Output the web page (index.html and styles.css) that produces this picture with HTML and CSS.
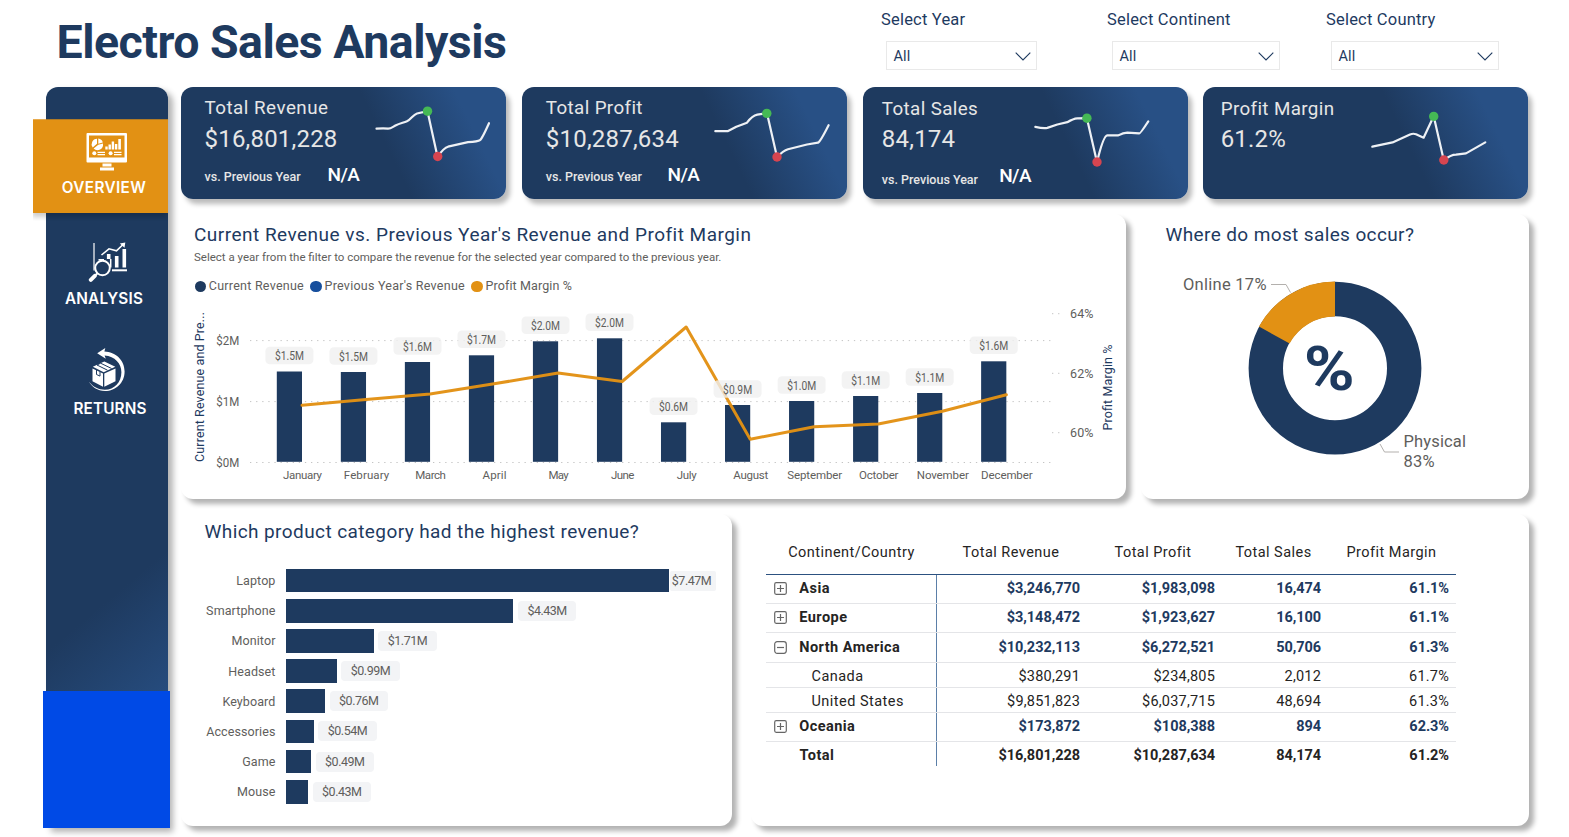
FILE: index.html
```html
<!DOCTYPE html>
<html lang="en">
<head>
<meta charset="utf-8">
<title>Electro Sales Analysis</title>
<link rel="stylesheet" href="styles.css">
</head>
<body>
<header class="header">
  <h1 class="title">Electro Sales Analysis</h1>
  <div class="filters">
    <div class="filter filter-year">
      <div class="filter-label">Select Year</div>
      <div class="select"><span>All</span><svg width="16" height="9" viewBox="0 0 16 9"><path d="M.7.7 8 8 15.300.7" /></svg></div>
    </div>
    <div class="filter filter-continent">
      <div class="filter-label">Select Continent</div>
      <div class="select"><span>All</span><svg width="16" height="9" viewBox="0 0 16 9"><path d="M.7.7 8 8 15.300.7" /></svg></div>
    </div>
    <div class="filter filter-country">
      <div class="filter-label">Select Country</div>
      <div class="select"><span>All</span><svg width="16" height="9" viewBox="0 0 16 9"><path d="M.7.7 8 8 15.300.7" /></svg></div>
    </div>
  </div>
</header>

<div class="layout">
  <nav class="sidebar">
    <div class="nav-item overview">
      <svg width="42" height="38.500" viewBox="0 0 42 38.500">
        <path fill="#fff" fill-rule="evenodd" d="M1.500 0h38.500a1 1 0 0 1 1 1v27.500a1 1 0 0 1-1 1H1.500a1 1 0 0 1-1-1V1a1 1 0 0 1 1-1ZM3 2.500v22h35.500v-22Z"/>
        <path fill="#fff" d="M16.500 30.500h9v3h-9zM14 34.500h14V37.500H14z"/>
        <path fill="#fff" d="M11 5.800v5l-4.300 3.600A5.400 5.400 0 0 1 11 5.800ZM12.300 5.600a5.200 5.200 0 0 1 4.500 3.900l-4.500 1.200ZM12.300 11.800l4.600-1.200a5.500 5.500 0 0 1-9.300 5Z"/>
        <path fill="#fff" d="M19.300 13.500h2.400v3h-2.400zM22.500 11.500h2.400v5h-2.400zM25.700 8.500h2.400v8h-2.400zM28.900 11h2.400v5.500h-2.400zM32.300 6h2.600v10.500h-2.600z"/>
        <circle cx="8.300" cy="20.300" r="2" fill="#fff"/><circle cx="24.600" cy="20.300" r="2" fill="#fff"/>
        <path fill="none" stroke="#fff" stroke-width="1.200" d="M11.500 19.300h7.500M11.500 21.600h7.500M28 19.300h7.500M28 21.600h7.500"/>
      </svg>
      <span>OVERVIEW</span>
    </div>
    <div class="nav-item analysis">
      <svg width="40" height="40" viewBox="0 0 40 40" fill="none" stroke="#fff">
        <path d="M6 1v27.500" stroke-width="1.600" opacity=".75"/>
        <path d="M24 28.300h15" stroke-width="2"/>
        <path d="M20.700 12v5M28.700 14v11.500M36.300 7v18.500" stroke-width="3.600"/>
        <path d="M10.500 17.700h5.500M22.700 17v8.500" stroke-width="1.500"/>
        <path d="m13.500 13 7.500-6.200 7.500 2L35.500 2" stroke-width="1.600"/>
        <path d="m31.800 1.500 5.500-1-.8 5.300z" fill="#fff" stroke="none"/>
        <circle cx="14.500" cy="26" r="7.300" stroke-width="2"/>
        <path d="m9.200 31.500-2 2" stroke-width="2"/>
        <path d="m6.800 33.800-4 4" stroke-width="4" stroke-linecap="round"/>
      </svg>
      <span>ANALYSIS</span>
    </div>
    <div class="nav-item returns">
      <svg width="38" height="44" viewBox="0 0 38 44">
        <path fill="#fff" d="M9.200 5.300 17.300 0l-.9 3.600C27.500 4 36.600 12 36.600 23.500c0 11.500-9 19.500-19.500 19.500C9.500 43 3.500 38.500.8 33.500c4 5.200 9.500 8.200 16 8.200 9.500 0 16.600-7.500 16.600-17.500 0-8.800-6.500-15.800-16.800-16.700l1.200 3.300Z"/>
        <path fill="#fff" d="M4.500 20.500 15 25.500v13.300L4.500 33.300ZM16.300 25.500l11.200-5v12.800l-11.200 5.500Z"/>
        <path fill="#fff" d="m4.800 18.800 11.500-5.300 11 5.300-11.600 5.400Z"/>
        <path fill="none" stroke="#1e3a5f" stroke-width="1" d="M12.600 15.200 9 17M12.600 15.200l11 5.300M9 17l10.500 5.200M8.500 22v4.500l3.500 1.600v-4.300"/>
      </svg>
      <span>RETURNS</span>
    </div>
    <div class="sidebar-block"></div>
  </nav>

  <main class="main">
    <section class="cards">
      <article class="card card-revenue">
        <div class="card-text">
          <div class="card-label">Total Revenue</div>
          <div class="card-value">$16,801,228</div>
          <div class="card-compare"><span>vs. Previous Year</span><b>N/A</b></div>
        </div>
        <svg class="spark" viewBox="371 87.300 135 111.700">
          <path d="M376.500 129Q384 128.500 388 129C391 129 393 127 396 125.500S403 123 407 121.500 413 115 417 113.800L427.500 111.500 437.500 157Q444 148 448 147L468 142.500Q478 142 480 140.500T489 123.500"/>
          <circle cx="427.500" cy="111.500" r="4.700" class="high"/><circle cx="437.700" cy="156.800" r="4.700" class="low"/>
        </svg>
      </article>
      <article class="card card-profit">
        <div class="card-text">
          <div class="card-label">Total Profit</div>
          <div class="card-value">$10,287,634</div>
          <div class="card-compare"><span>vs. Previous Year</span><b>N/A</b></div>
        </div>
        <svg class="spark" viewBox="711.700 87.300 135 111.700">
          <path d="M715 131.500H727.300L736 127 746.700 123Q752 116 757 115L766.700 113.500 776.700 157.300Q783 151 787.700 149.500L806.700 144.800 817.700 143Q820 142 828.300 125.500"/>
          <circle cx="766.500" cy="113.700" r="4.700" class="high"/><circle cx="776.700" cy="157.300" r="4.700" class="low"/>
        </svg>
      </article>
      <article class="card card-sales">
        <div class="card-text">
          <div class="card-label">Total Sales</div>
          <div class="card-value">84,174</div>
          <div class="card-compare"><span>vs. Previous Year</span><b>N/A</b></div>
        </div>
        <svg class="spark" viewBox="1032.700 87.300 155 111.700">
          <path d="M1035 127.200Q1043 129 1047 128.200L1057 124.800 1067 122.500Q1073 119 1077 118.700L1086.600 118.500 1096.700 162.500Q1103 136 1107 135.700H1118Q1123 133 1127 133L1139 133.700Q1140 134 1148 121.700"/>
          <circle cx="1086.600" cy="118.500" r="4.700" class="high"/><circle cx="1096.700" cy="162.300" r="4.700" class="low"/>
        </svg>
      </article>
      <article class="card card-margin">
        <div class="card-text">
          <div class="card-label">Profit Margin</div>
          <div class="card-value">61.2%</div>
        </div>
        <svg class="spark" viewBox="1373 87.300 155 111.700">
          <path d="M1372.300 147 1392.500 142.700 1410 134.800Q1413 133.500 1416 134.500L1423.600 138 1433.700 116.500 1443.800 160.500Q1451 155 1456 155L1466 153.700 1485.300 142.700"/>
          <circle cx="1433.700" cy="116.700" r="4.700" class="high"/><circle cx="1443.800" cy="160.300" r="4.700" class="low"/>
        </svg>
      </article>
    </section>

    <section class="row row-top">
      <article class="panel trend">
        <h2>Current Revenue vs. Previous Year's Revenue and Profit Margin</h2>
        <p class="subtitle">Select a year from the filter to compare the revenue for the selected year compared to the previous year.</p>
        <div class="legend">
          <span class="key"><i class="dot current"></i>Current Revenue</span>
          <span class="key"><i class="dot previous"></i>Previous Year's Revenue</span>
          <span class="key margin"><i class="dot profit"></i>Profit Margin %</span>
        </div>
        <svg class="chart" width="944" height="205" viewBox="181 294 944 205">
          <path class="grid" d="M250 340.600H1054M250 401.600H1054M250 462.500H1054M1052 313.700h8M1052 373.300h8M1052 432.700h8"/>
          <g class="axis">
            <text x="216.300" y="345" textLength="23" lengthAdjust="spacingAndGlyphs">$2M</text>
            <text x="216.300" y="406" textLength="23" lengthAdjust="spacingAndGlyphs">$1M</text>
            <text x="216.300" y="467" textLength="23" lengthAdjust="spacingAndGlyphs">$0M</text>
            <text x="1070" y="318.200" textLength="23.500">64%</text>
            <text x="1070" y="378" textLength="23.500">62%</text>
            <text x="1070" y="437.200" textLength="23.500">60%</text>
          </g>
          <g class="axis-title">
            <text transform="translate(204 462) rotate(-90)" textLength="150">Current Revenue and Pre...</text>
            <text transform="translate(1111.500 430.500) rotate(-90)" textLength="86">Profit Margin %</text>
          </g>
          <g class="bars" id="bars"></g>
          <polyline class="line" id="line"/>
          <g id="tags"></g>
          <g class="months" id="months"></g>
        </svg>
      </article>

      <article class="panel donut">
        <h2>Where do most sales occur?</h2>
        <svg class="chart" width="388" height="252" viewBox="1141 247 388 252">
          <circle cx="1335" cy="368.200" r="69.200" fill="none" stroke="#1e3a5f" stroke-width="34.400"/>
          <path d="M1335 299A69.200 69.200 0 0 0 1274.300 335" fill="none" stroke="#e29114" stroke-width="35"/>
          <path class="leader" d="M1271 284.500H1286L1290.500 292.500M1380 444L1384.500 452H1399"/>
          <text class="percent" x="1303.800" y="389.900" textLength="51" lengthAdjust="spacingAndGlyphs">%</text>
          <g class="slice-label">
            <text x="1183" y="290" textLength="83.500">Online 17%</text>
            <text x="1403.500" y="447" textLength="62.500">Physical</text>
            <text x="1403.500" y="467" textLength="31">83%</text>
          </g>
        </svg>
      </article>
    </section>

    <section class="row row-bottom">
      <article class="panel categories">
        <h2>Which product category had the highest revenue?</h2>
        <div class="hbars">
          <div class="hrow"><span class="name">Laptop</span><i class="bar" style="width:383px"></i><span class="pill tight">$7.47M</span></div>
          <div class="hrow"><span class="name">Smartphone</span><i class="bar" style="width:227.300px"></i><span class="pill">$4.43M</span></div>
          <div class="hrow"><span class="name">Monitor</span><i class="bar" style="width:87.700px"></i><span class="pill">$1.71M</span></div>
          <div class="hrow"><span class="name">Headset</span><i class="bar" style="width:50.700px"></i><span class="pill">$0.99M</span></div>
          <div class="hrow"><span class="name">Keyboard</span><i class="bar" style="width:39px"></i><span class="pill">$0.76M</span></div>
          <div class="hrow"><span class="name">Accessories</span><i class="bar" style="width:27.700px"></i><span class="pill">$0.54M</span></div>
          <div class="hrow"><span class="name">Game</span><i class="bar" style="width:25px"></i><span class="pill">$0.49M</span></div>
          <div class="hrow"><span class="name">Mouse</span><i class="bar" style="width:22px"></i><span class="pill">$0.43M</span></div>
        </div>
      </article>

      <article class="panel regions">
        <div class="table">
          <div class="tr head"><span>Continent/Country</span><span>Total Revenue</span><span>Total Profit</span><span>Total Sales</span><span>Profit Margin</span></div>
          <div class="tr group asia"><span><svg class="toggle" viewBox="0 0 13 13"><rect x=".7" y=".7" width="11.600" height="11.600" rx="1.500"/><path d="M3 6.500h7M6.500 3v7"/></svg>Asia</span><span>$3,246,770</span><span>$1,983,098</span><span>16,474</span><span>61.1%</span></div>
          <div class="tr group europe"><span><svg class="toggle" viewBox="0 0 13 13"><rect x=".7" y=".7" width="11.600" height="11.600" rx="1.500"/><path d="M3 6.500h7M6.500 3v7"/></svg>Europe</span><span>$3,148,472</span><span>$1,923,627</span><span>16,100</span><span>61.1%</span></div>
          <div class="tr group america"><span><svg class="toggle" viewBox="0 0 13 13"><rect x=".7" y=".7" width="11.600" height="11.600" rx="2.500"/><path d="M3 6.500h7"/></svg>North America</span><span>$10,232,113</span><span>$6,272,521</span><span>50,706</span><span>61.3%</span></div>
          <div class="tr child"><span>Canada</span><span>$380,291</span><span>$234,805</span><span>2,012</span><span>61.7%</span></div>
          <div class="tr child"><span>United States</span><span>$9,851,823</span><span>$6,037,715</span><span>48,694</span><span>61.3%</span></div>
          <div class="tr group oceania"><span><svg class="toggle" viewBox="0 0 13 13"><rect x=".7" y=".7" width="11.600" height="11.600" rx="1.500"/><path d="M3 6.500h7M6.500 3v7"/></svg>Oceania</span><span>$173,872</span><span>$108,388</span><span>894</span><span>62.3%</span></div>
          <div class="tr total"><span>Total</span><span>$16,801,228</span><span>$10,287,634</span><span>84,174</span><span>61.2%</span></div>
        </div>
      </article>
    </section>
  </main>
</div>
<script src="chart.js"></script>
</body>
</html>
```
FILE: styles.css
```css
* { box-sizing: border-box; }
body {
  margin: 0;
  width: 1569px;
  height: 837px;
  overflow: hidden;
  background: #fff;
  font-family: Roboto, "Liberation Sans", sans-serif;
  color: #1e3a5f;
}
h1, h2, p { margin: 0; }
i { font-style: normal; }
svg { display: block; flex: none; }

.header { display: flex; height: 87.3px; }
.title {
  padding: 13.8px 0 0 56.5px;
  width: 881px;
  font-size: 46.5px;
  line-height: 56px;
  font-weight: 700;
  letter-spacing: -0.52px;
}
.filters { display: flex; padding-top: 10.2px; }
.filter-label { font-size: 16.5px; line-height: 20px; letter-spacing: 0.2px; }
.filter-year { width: 226px; }
.filter-continent { width: 219px; }
.select {
  display: flex;
  align-items: center;
  justify-content: space-between;
  margin: 10.8px 0 0 5.4px;
  padding: 2px 5.5px 0 6px;
  height: 29px;
  border: 1px solid #e9e9e9;
  font-size: 14.5px;
  letter-spacing: 0.2px;
}
.filter-year .select { width: 151px; }
.filter-continent .select, .filter-country .select { width: 168px; }
.select svg { fill: none; stroke: #1e3a5f; stroke-width: 1.1; }

.layout { display: flex; padding-left: 46px; }

.sidebar {
  display: flex;
  flex-direction: column;
  width: 122px;
  height: 740.4px;
  border-radius: 12px 12px 0 0;
  background: linear-gradient(140deg, #1e3a5f 67%, #285085 88%);
  box-shadow: 5px 4px 6px rgba(0, 0, 0, .3);
  padding-top: 32px;
}
.nav-item {
  display: flex;
  flex-direction: column;
  align-items: center;
  color: #fff;
  font-family: Inter, Roboto, sans-serif;
  font-weight: 600;
  font-size: 15.3px;
  line-height: 18px;
}
.overview {
  height: 93.5px;
  margin-left: -13px;
  padding: 13.7px 0 0 7px;
  background: #e29114;
  box-shadow: -1px 4px 5px rgba(0, 0, 0, .2);
  letter-spacing: 0.36px;
  clip-path: inset(0 0 -8px 0);
}
.overview svg { margin: 0 0 8px 5px; }
.analysis { padding: 29.7px 6px 0 0; letter-spacing: 0.2px; }
.analysis svg { margin: 0 0 7.6px 7px; }
.returns { padding: 40.4px 0 0 6px; letter-spacing: 0.14px; }
.returns svg { margin: 0 7px 7.9px 0; }
.sidebar-block { height: 136.7px; margin: auto -2px 0 -3px; background: #004ae6; }

.main { display: flex; flex-direction: column; width: 1347.5px; margin-left: 13px; }

.cards { display: flex; justify-content: space-between; height: 111.7px; }
.card {
  display: flex;
  justify-content: space-between;
  width: 325px;
  border-radius: 12px;
  background: linear-gradient(64deg, #1e3a5f 61%, #285085 86%);
  box-shadow: 4px 5px 5px rgba(0, 0, 0, .27);
  color: #e6e6e6;
}
.card-text { padding: 8.3px 0 0 23.5px; white-space: nowrap; }
.card-profit .card-text { padding-left: 24px; }
.card-sales .card-text { padding: 9.3px 0 0 19.2px; }
.card-margin .card-text { padding: 9.3px 0 0 17.2px; }
.card-label { font-size: 18.8px; line-height: 24px; letter-spacing: 0.37px; }
.card-revenue .card-label { letter-spacing: 0.49px; }
.card-value { margin-top: 4.2px; font-size: 24px; line-height: 30px; letter-spacing: 0.2px; }
.card-sales .card-value, .card-margin .card-value { margin-top: 3.6px; }
.card-compare {
  display: flex;
  align-items: baseline;
  margin-top: 9.5px;
  font-size: 12.5px;
  line-height: 24px;
  font-weight: 500;
}
.card-compare span { width: 123px; }
.card-compare b { color: #fff; font-size: 19px; font-weight: 500; letter-spacing: -0.6px; }
.card-profit .card-compare span { width: 121.7px; }
.card-sales .card-compare { align-items: flex-start; margin-top: 10.8px; }
.card-sales .card-compare span { width: 117.4px; padding-top: 3.2px; }
.card-sales .card-compare b { margin-top: -1px; }
.spark { width: 135px; height: 111.7px; overflow: visible; }
.card-sales .spark, .card-margin .spark { width: 155px; }
.spark path { fill: none; stroke: #eef1f5; stroke-width: 2.2; stroke-linecap: round; stroke-linejoin: round; }
.high { fill: #45b955; }
.low { fill: #d64550; }

.row { display: flex; justify-content: space-between; }
.row-top { margin-top: 15px; height: 285.5px; }
.row-bottom { margin-top: 14.5px; height: 312px; }
.panel { border-radius: 12px; background: #fff; box-shadow: 5px 5px 5px rgba(0, 0, 0, .3); }
.panel h2 { font-size: 19px; line-height: 24px; font-weight: 400; letter-spacing: 0.45px; white-space: nowrap; }

.trend { width: 944.5px; padding-top: 9.4px; }
.trend h2 { padding-left: 13px; letter-spacing: 0.48px; }
.subtitle { margin-top: 1.7px; padding-left: 13px; font-size: 11.5px; line-height: 16px; color: #605e5c; }
.legend { display: flex; margin-top: 12.9px; padding-left: 13.5px; font-size: 12.5px; line-height: 16px; letter-spacing: 0.25px; color: #605e5c; }
.key { display: flex; align-items: center; margin-right: 6.3px; }
.margin { letter-spacing: 0.12px; }
.dot { width: 11.8px; height: 11.8px; margin: 1px 2.5px 0 0; border-radius: 50%; }
.current { background: #1e3a5f; }
.previous { background: #174f9d; }
.profit { background: #e29114; }

.grid { fill: none; stroke: #c4c4c4; stroke-width: 1; stroke-dasharray: 1.3 4.8; }
.axis text { font-size: 12.5px; fill: #605e5c; }
.axis-title text { font-size: 12.5px; fill: #1e3a5f; }
.bars rect { fill: #1e3a5f; }
.line { fill: none; stroke: #e29114; stroke-opacity: .97; stroke-width: 3; stroke-linejoin: round; stroke-linecap: round; }
.tag rect { fill: #f0f0f0; fill-opacity: .8; }
.tag text { font-size: 12px; fill: #605e5c; text-anchor: middle; }
.months text { font-size: 11.5px; fill: #605e5c; text-anchor: middle; }

.donut { width: 388px; padding-top: 9.4px; }
.donut h2 { padding-left: 25px; letter-spacing: 0.38px; }
.leader { fill: none; stroke: #b3b0ad; stroke-width: 1; }
.percent { font-size: 62px; font-weight: 700; fill: #1e3a5f; }
.slice-label text { font-size: 16.5px; fill: #605e5c; }

.categories { width: 551px; padding-top: 6.4px; }
.categories h2 { padding-left: 23.5px; letter-spacing: 0.41px; }
.hbars { padding-top: 21.2px; }
.hrow { display: flex; align-items: center; height: 30.17px; font-size: 12.5px; color: #605e5c; }
.name { width: 94.5px; margin-right: 10.5px; text-align: right; letter-spacing: 0.1px; }
.bar { height: 23.6px; background: #1e3a5f; }
.pill {
  width: 58.5px;
  height: 20px;
  margin-left: 4.5px;
  border-radius: 4px;
  background: #f3f4f6;
  line-height: 20px;
  text-align: center;
  letter-spacing: -0.5px;
}
.tight { width: 46px; margin-left: 1px; padding-right: 3px; border-radius: 2px; }

.regions { width: 777.5px; padding: 21px 0 0 15px; }
.table { width: 690px; font-size: 14.5px; color: #252423; }
.tr {
  display: grid;
  grid-template-columns: 170px 149px 135px 106px 130px;
  height: 29.5px;
  border-bottom: 1px solid #e4e5e8;
}
.tr > span { display: flex; align-items: center; justify-content: flex-end; padding-right: 5px; letter-spacing: 0.2px; }
.tr > span:last-child { padding-right: 7px; }
.tr > span:first-child { justify-content: flex-start; padding-left: 33.5px; letter-spacing: 0.47px; }
.tr > span:nth-child(2) { border-left: 1.5px solid #5b7fa8; }
.tr.head { height: 40px; border-bottom: 1.5px solid #2c5180; }
.tr.head > span, .tr.head > span:first-child { justify-content: center; padding: 0 0 4px 1px; border: 0; letter-spacing: 0.46px; }
.group, .total { font-weight: 700; }
.group > span { color: #1e3a5f; }
.group > span:first-child { padding-left: 8.3px; color: #252423; letter-spacing: 0.45px; }
.group > span + span, .total > span + span { letter-spacing: -0.05px; }
.tr.child { height: 24.6px; }
.tr.child > span { padding-top: 3px; }
.tr.child > span:first-child { padding-left: 45.5px; }
.total { height: 24.5px; border: 0; }
.total > span { padding-top: 3px; }
.asia { height: 28.9px; }
.europe { height: 29.4px; }
.america { height: 30.1px; }
.europe > span, .america > span { padding-bottom: 1px; }
.oceania { height: 29px; }
.toggle { width: 13px; height: 13px; margin-right: 12px; fill: none; stroke: #666; stroke-width: 1.2; }
```
FILE: chart.js
```js
// name, bar top, value label, margin line y, month label width
const data = [
  ['January', 371.5, '$1.5M', 405.3, 39], ['February', 372, '$1.5M', 399.5, 45.5],
  ['March', 362, '$1.6M', 394, 30.5], ['April', 355.3, '$1.7M', 383.8, 24],
  ['May', 341.3, '$2.0M', 373, 20], ['June', 338.3, '$2.0M', 381.5, 23.5],
  ['July', 422.3, '$0.6M', 327, 20], ['August', 405, '$0.9M', 439.3, 35],
  ['September', 401, '$1.0M', 426.7, 55], ['October', 396, '$1.1M', 424, 39.5],
  ['November', 393, '$1.1M', 411.3, 52], ['December', 361.3, '$1.6M', 394.7, 51.5]
];
const step = 64.03, base = 461.8;
let bars = '', tags = '', months = '', points = '';
data.forEach(([name, top, value, y, width], i) => {
  const left = 276.8 + step * i, mid = left + 12.6, right = left + 25.2;
  bars += `<rect x="${left}" y="${top}" width="25.2" height="${base - top}"/>`;
  tags += `<g class="tag"><rect x="${mid - 24}" y="${top - 24.8}" width="48" height="17.5" rx="4.5"/>` +
    `<text x="${mid}" y="${top - 11.5}" textLength="29" lengthAdjust="spacingAndGlyphs">${value}</text></g>`;
  months += `<text x="${right + .5}" y="479" textLength="${width}">${name}</text>`;
  points += `${right},${y} `;
});
document.getElementById('bars').innerHTML = bars;
document.getElementById('tags').innerHTML = tags;
document.getElementById('months').innerHTML = months;
document.getElementById('line').setAttribute('points', points);
```
